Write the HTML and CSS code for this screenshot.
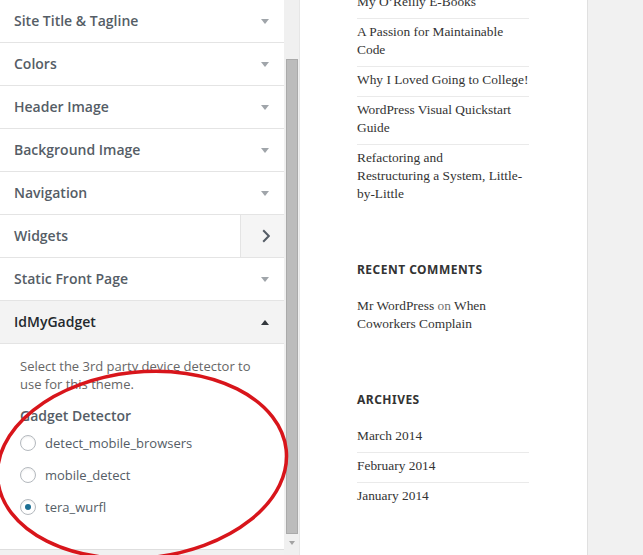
FILE: index.html
```html
<!DOCTYPE html>
<html lang="en">
<head>
<meta charset="utf-8">
<title>Customizer – IdMyGadget</title>
<link rel="stylesheet" href="styles.css">
</head>
<body>
<div class="page">
  <aside class="customizer">
    <ul class="sections">
      <li class="section"><h3 class="section-title"><span class="label">Site Title &amp; Tagline</span><span class="caret"></span></h3></li>
      <li class="section"><h3 class="section-title"><span class="label">Colors</span><span class="caret"></span></h3></li>
      <li class="section"><h3 class="section-title"><span class="label">Header Image</span><span class="caret"></span></h3></li>
      <li class="section"><h3 class="section-title"><span class="label">Background Image</span><span class="caret"></span></h3></li>
      <li class="section"><h3 class="section-title"><span class="label">Navigation</span><span class="caret"></span></h3></li>
      <li class="section"><h3 class="section-title panel-title"><span class="label">Widgets</span><span class="panel-go"><svg class="chevron" width="8" height="14" viewBox="0 0 8 14"><polyline points="1.2,1.2 6.8,7 1.2,12.8" fill="none" stroke="#555d66" stroke-width="2"/></svg></span></h3></li>
      <li class="section"><h3 class="section-title"><span class="label">Static Front Page</span><span class="caret"></span></h3></li>
      <li class="section open">
        <h3 class="section-title"><span class="label">IdMyGadget</span><span class="caret caret-up"></span></h3>
        <div class="section-content">
          <p class="description">Select the 3rd party device detector to use for this theme.</p>
          <div class="control-title">Gadget Detector</div>
          <label class="radio"><span class="radio-box"></span>detect_mobile_browsers</label>
          <label class="radio"><span class="radio-box"></span>mobile_detect</label>
          <label class="radio"><span class="radio-box checked"></span>tera_wurfl</label>
        </div>
      </li>
    </ul>
  </aside>
  <div class="scrollbar">
    <div class="thumb"></div>
    <div class="arrow-down"></div>
  </div>
  <main class="preview">
    <div class="site-sidebar">
      <div class="widget-area">
        <section class="widget">
          <ul class="widget-list">
            <li>My O’Reilly E-Books</li>
            <li>A Passion for Maintainable Code</li>
            <li>Why I Loved Going to College!</li>
            <li>WordPress Visual Quickstart Guide</li>
            <li>Refactoring and<br>Restructuring a System, Little-by-Little</li>
          </ul>
        </section>
        <section class="widget">
          <h2 class="widget-title">Recent Comments</h2>
          <ul class="widget-list">
            <li>Mr WordPress <span class="muted">on</span> When Coworkers Complain</li>
          </ul>
        </section>
        <section class="widget">
          <h2 class="widget-title">Archives</h2>
          <ul class="widget-list">
            <li>March 2014</li>
            <li>February 2014</li>
            <li>January 2014</li>
          </ul>
        </section>
      </div>
    </div>
    <div class="site-body"></div>
  </main>
  <svg class="annotation" width="643" height="555" viewBox="0 0 643 555">
    <ellipse cx="142" cy="465" rx="145" ry="93" transform="rotate(-6 142 465)" fill="none" stroke="#d8151b" stroke-width="3.5"/>
  </svg>
</div>
</body>
</html>
```

FILE: styles.css
```css
html, body {
  margin: 0;
  padding: 0;
}

body {
  width: 643px;
  height: 555px;
  overflow: hidden;
  background: #f1f1f1;
}

.page {
  position: relative;
  display: flex;
  width: 643px;
  height: 555px;
  overflow: hidden;
}

/* ---------- Customizer sidebar ---------- */
.customizer {
  width: 284px;
  flex: none;
  background: #f1f1f1;
  font-family: "Open Sans", "Noto Sans", sans-serif;
}

.sections {
  list-style: none;
  margin: 0;
  padding: 0;
}

.section-title {
  display: flex;
  align-items: center;
  justify-content: space-between;
  box-sizing: border-box;
  height: 43px;
  margin: 0;
  padding: 0 15px 0 14px;
  background: #fff;
  border-bottom: 1px solid #e4e4e4;
  font-size: 14px;
  font-weight: 600;
  line-height: 21px;
  color: #555d66;
}

.label {
  padding-bottom: 2px;
}

.caret {
  width: 0;
  height: 0;
  border-left: 4px solid transparent;
  border-right: 4px solid transparent;
  border-top: 5px solid #a0a5aa;
}

.caret-up {
  border-top: 0;
  border-bottom: 5px solid #32373c;
}

.panel-title {
  padding-right: 0;
}

.panel-go {
  display: flex;
  align-items: center;
  align-self: stretch;
  box-sizing: border-box;
  width: 44px;
  padding-left: 21px;
  background: #f5f5f5;
  border-left: 1px solid #e4e4e4;
}

.chevron {
  display: block;
}

.open .section-title {
  background: #f3f3f3;
  color: #23282d;
}

.section-content {
  box-sizing: border-box;
  background: #fff;
  padding: 13px 20px 26px 20px;
  border-bottom: 1px solid #dedede;
  font-size: 13px;
  color: #555d66;
}

.description {
  margin: 0;
  line-height: 18px;
  color: #666;
}

.control-title {
  margin: 13px 0 1px;
  font-size: 14px;
  font-weight: 600;
  line-height: 20px;
  color: #555d66;
}

.radio {
  display: flex;
  align-items: center;
  height: 32px;
  line-height: 18px;
  color: #555d66;
}

.radio-box {
  position: relative;
  box-sizing: border-box;
  width: 16px;
  height: 16px;
  margin-right: 9px;
  border: 1px solid #b4b9be;
  border-radius: 50%;
  background: #fff;
  box-shadow: inset 0 1px 2px rgba(0, 0, 0, 0.07);
}

.radio-box.checked::after {
  content: "";
  position: absolute;
  left: 4px;
  top: 4px;
  width: 6px;
  height: 6px;
  border-radius: 50%;
  background: #1c6f94;
}

/* ---------- fake scrollbar ---------- */
.scrollbar {
  width: 16px;
  flex: none;
  display: flex;
  flex-direction: column;
  align-items: flex-start;
  box-sizing: border-box;
  padding: 59px 0 0 2px;
  background: #f0f0f0;
  border-right: 1px solid #e6e6e6;
}

.thumb {
  box-sizing: border-box;
  width: 12px;
  height: 475px;
  background: #bcbcbc;
  border: 1px solid #aaaaaa;
}

.arrow-down {
  width: 0;
  height: 0;
  margin: 7px 0 0 3px;
  border-left: 3px solid transparent;
  border-right: 3px solid transparent;
  border-top: 4px solid #a3a3a3;
}

/* ---------- site preview ---------- */
.preview {
  flex: 1;
  display: flex;
  background: #f1f1f1;
}

.site-sidebar {
  flex: none;
  width: 288px;
  padding-left: 57px;
  box-sizing: border-box;
  background: #fff;
  border-right: 1px solid #e0e0e0;
}

.widget-area {
  width: 172px;
  margin-top: -11px;
  font-family: "Liberation Serif", "DejaVu Serif", serif;
  font-size: 13.4px;
  line-height: 18px;
  color: #333;
}

.widget {
  margin-bottom: 51px;
}

.widget-title {
  margin: 0 0 14px;
  font-family: "Noto Sans", "Open Sans", sans-serif;
  font-size: 12px;
  font-weight: 700;
  line-height: 18px;
  letter-spacing: 0.04em;
  text-transform: uppercase;
  color: #333;
}

.widget-list {
  list-style: none;
  margin: 0;
  padding: 0;
}

.widget-list li {
  padding: 4px 0 7px;
  border-top: 1px solid #eaeaea;
}

.widget-list li:first-child {
  border-top: 0;
}

.muted {
  color: #707070;
}

.site-body {
  flex: 1;
  background: #f1f1f1;
}

/* ---------- red annotation ---------- */
.annotation {
  position: absolute;
  left: 0;
  top: 0;
  pointer-events: none;
}
```
